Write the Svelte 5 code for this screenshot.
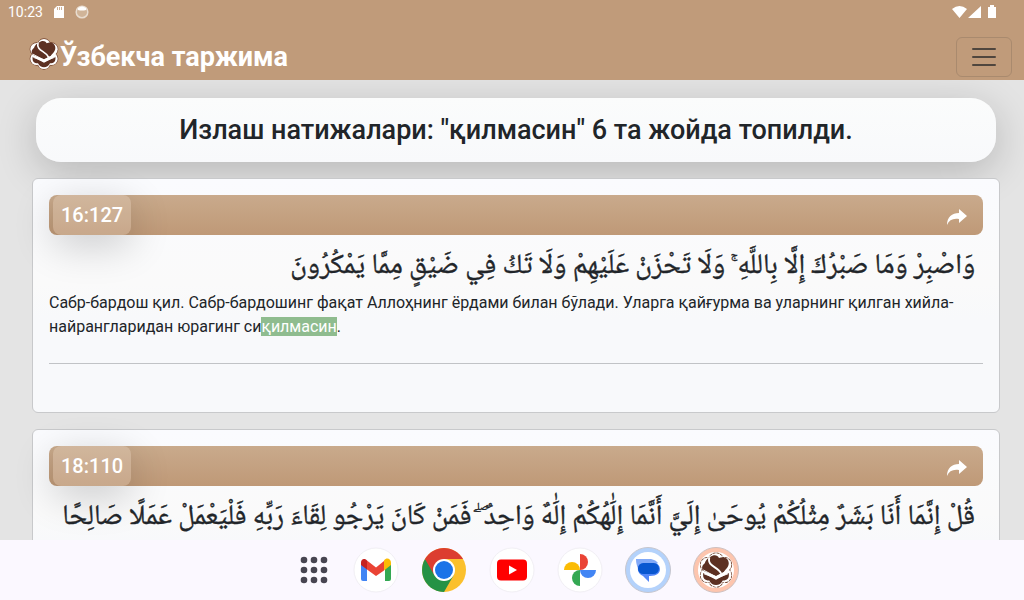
<script>
  const verses = [
    {
      ref: '16:127',
      arabic: 'وَاصْبِرْ وَمَا صَبْرُكَ إِلَّا بِاللَّهِ ۚ وَلَا تَحْزَنْ عَلَيْهِمْ وَلَا تَكُ فِي ضَيْقٍ مِمَّا يَمْكُرُونَ',
      before: 'Сабр-бардош қил. Сабр-бардошинг фақат Аллоҳнинг ёрдами билан бўлади. Уларга қайғурма ва уларнинг қилган хийла-найрангларидан юрагинг си',
      match: 'қилмасин',
      after: '.'
    },
    {
      ref: '18:110',
      arabic: 'قُلْ إِنَّمَا أَنَا بَشَرٌ مِثْلُكُمْ يُوحَىٰ إِلَيَّ أَنَّمَا إِلَٰهُكُمْ إِلَٰهٌ وَاحِدٌ ۖ فَمَنْ كَانَ يَرْجُو لِقَاءَ رَبِّهِ فَلْيَعْمَلْ عَمَلًا صَالِحًا'
    }
  ];
  const lobes = [[24, 11], [35, 17], [35, 31], [24, 37], [13, 31], [13, 17]];
</script>

{#snippet emblem()}
  <g class="edge">{#each lobes as [x, y]}<circle cx={x} cy={y} r="9.500" />{/each}</g>
  <g fill="#fff">{#each lobes as [x, y]}<circle cx={x} cy={y} r="9.500" />{/each}<circle cx="24" cy="24" r="12" /></g>
  <path d="M16 7c5-4 10-3 12 1 6-3 13 0 13 7 0 5-4 8-7 12l-10 5L7 25c-3-4-1-8 2-10 1-4 4-7 7-8z" fill="#5c3022" />
  <path d="M7 28l17 9 17-9c1 7-2 10-8 10-2 4-5 6-9 6s-7-2-9-6c-6 0-9-3-8-10z" fill="#5c3022" />
  <path d="M15 7c-3 13 12 12 16 22" fill="none" stroke="#fff" stroke-width="2.500" />
  <path d="M7 24l17 9 17-9M8 29l16 6 16-6" fill="none" stroke="#fff" stroke-width="1.300" />
{/snippet}

<div class="screen">
  <header>
    <div class="status">
      <span>10:23</span>
      <svg width="12" height="14" viewBox="0 0 12 14" aria-hidden="true"><path d="M4 1h7v12H1V4z" fill="#fff" /><path d="M4.500 2v3M6.500 2v3M8.500 2v3" stroke="#c19d7b" stroke-width=".8" /></svg>
      <svg width="14" height="14" viewBox="0 0 14 14" aria-hidden="true"><circle cx="7" cy="7" r="5.800" fill="#d0b498" stroke="#e8dccf" stroke-width="1.500" /><path d="M3 3q4-3 8 0v2q-4 1-8 0z" fill="#fff" /></svg>
      <svg class="signals" width="46" height="14" viewBox="0 0 46 14" aria-hidden="true"><path d="M0 4q7.500-6 15 0L7.500 13zM29 1v12H16zM36 2h2V0h4v2h2v11h-8z" fill="#fff" /></svg>
    </div>
    <nav>
      <a class="brand" href="#top"><svg width="32" height="32" viewBox="0 0 48 48" aria-hidden="true">{@render emblem()}</svg><span>Ўзбекча таржима</span></a>
      <button class="toggler" aria-label="Меню"><svg width="30" height="30" viewBox="0 0 30 30"><path d="M4 7h22M4 15h22M4 23h22" stroke="#4f463e" stroke-width="2" stroke-linecap="round" /></svg></button>
    </nav>
  </header>

  <main>
    <h1>Излаш натижалари: "қилмасин" 6 та жойда топилди.</h1>
    {#each verses as v}
      <article>
        <div class="bar">
          <a class="ref" href={'#' + v.ref}>{v.ref}</a>
          <button class="share" aria-label="Улашиш"><svg width="20" height="18" viewBox="0 0 20 18"><path d="M12 1l8 7-8 7v-4C6 10 2 12 0 17 0 9 5 5 12 5z" fill="#fff" /></svg></button>
        </div>
        <p class="arabic" dir="rtl" lang="ar">{v.arabic}</p>
        {#if v.match}
          <p class="text">{v.before}<mark>{v.match}</mark>{v.after}</p>
        {/if}
        <hr />
      </article>
    {/each}
  </main>

  <footer>
    <button aria-label="Apps"><svg width="36" height="48" viewBox="6 0 36 48"><g fill="#474551">{#each [14, 24, 34] as y}{#each [14, 24, 34] as x}<circle cx={x} cy={y} r="3.300" />{/each}{/each}</g></svg></button>
    <button aria-label="Gmail"><svg width="48" height="48" viewBox="0 0 48 48"><circle cx="24" cy="24" r="22" class="disc" /><path d="M9 17l6 4v14h-4q-2 0-2-2z" fill="#4285f4" /><path d="M39 17l-6 4v14h4q2 0 2-2z" fill="#34a853" /><path d="M32 14.500c3-4 7-1 7 2V19l-7 5.500z" fill="#fbbc04" /><path d="M15 14.500l9 7 8-6.500v9.500L24 30l-9-6.500z" fill="#ea4335" /><path d="M9 19v-2.500c0-3 3-5 6-2v9z" fill="#c5221f" /></svg></button>
    <button aria-label="Chrome"><svg width="48" height="48" viewBox="0 0 48 48"><circle cx="24" cy="24" r="22" fill="#fbc02d" /><path d="M24 24L5 13A22 22 0 0 0 24 46l9.500-16.500z" fill="#259245" /><path d="M5 13A22 22 0 0 1 43 13H24v11l-9.500 5.500z" fill="#dc3d30" /><circle cx="24" cy="24" r="11" fill="#fff" /><circle cx="24" cy="24" r="9" fill="#1a73e8" /></svg></button>
    <button aria-label="YouTube"><svg width="48" height="48" viewBox="0 0 48 48"><circle cx="24" cy="24" r="22" class="disc" /><rect x="9" y="13.500" width="30" height="21" rx="4" fill="#f00" /><path d="M21 19.500v9l8-4.500z" fill="#fff" /></svg></button>
    <button aria-label="Photos"><svg width="48" height="48" viewBox="0 0 48 48"><circle cx="24" cy="24" r="22" class="disc" /><path d="M24 8a8 8 0 0 1 0 16z" fill="#ea4335" /><path d="M40 24a8 8 0 0 1-16 0z" fill="#4285f4" /><path d="M24 40a8 8 0 0 1 0-16z" fill="#34a853" /><path d="M8 24a8 8 0 0 1 16 0z" fill="#fbbc04" /></svg></button>
    <button aria-label="Messages"><svg width="48" height="48" viewBox="0 0 48 48"><circle cx="24" cy="24" r="22.500" fill="#b4d2fb" stroke="#c6c6ce" /><circle cx="24" cy="24" r="18" fill="#fff" /><path d="M12 13h15q5 1 7 4L18 27c-4-3-6-8-6-14z" fill="#82a9f7" /><path d="M20 17h10a6 6 0 0 1 6 6c0 4-3 7-10 7h-1v6l-6-6c-7-3-7-13 1-13z" fill="#5387f8" /><rect x="14" y="17" width="21" height="11" rx="5.500" fill="#0957d0" /></svg></button>
    <button aria-label="Ўзбекча таржима"><svg width="48" height="48" viewBox="0 0 48 48"><circle cx="24" cy="24" r="22.500" fill="#fdc5ae" stroke="#cdc0c0" /><circle cx="24" cy="24" r="18" fill="#fff" /><g class="fine" transform="translate(6 6) scale(.75)">{@render emblem()}</g></svg></button>
  </footer>
</div>

<style>
  :global(body) { margin: 0; }
  * { box-sizing: border-box; }
  .screen { height: 100vh; display: flex; flex-direction: column; overflow: hidden; background: #e4e4e4; color: #212529; font-family: Roboto, sans-serif; font-size: 16px; line-height: 24px; }
  header { flex: none; background: #c09b7a; color: #fff; }
  .status { display: flex; align-items: center; gap: 10px; height: 24px; padding: 0 26px 0 8px; font-size: 14px; }
  .signals { margin-left: auto; }
  nav { display: flex; justify-content: space-between; align-items: center; height: 56px; padding: 10px 12px 0 28px; }
  .brand { display: flex; align-items: flex-start; color: #fff; font-size: 27px; line-height: 38px; font-weight: 700; text-decoration: none; }
  button { display: flex; align-items: center; justify-content: center; border: 0; padding: 0; background: none; }
  .toggler { width: 56px; height: 40px; border: 1px solid #a98a6e; border-radius: 6px; }
  .edge { fill: none; stroke: #75452f; stroke-width: 2; }
  .fine .edge { stroke-width: 2; stroke-dasharray: 4 1; }
  main { flex: 1; min-height: 0; padding: 18px 24px 0 32px; overflow: hidden; }
  h1 { margin: 0 4px 16px; padding: 14px 16px; border-radius: 25px; background: linear-gradient(#fbfcfc, #f8f9fb); box-shadow: 0 10px 40px rgba(0, 0, 0, .2); text-align: center; font-size: 27px; line-height: 36px; font-weight: 500; }
  article { margin-bottom: 16px; padding: 16px; border: 1px solid #c8c9cb; border-radius: 6px; background: linear-gradient(#fafbfe, #fafafa 45%, #f8f9fb 60%); }
  .bar { display: flex; justify-content: space-between; height: 40px; padding: 0 16px 0 4px; border-radius: 8px; background: linear-gradient(#c9aa8c, #bf9977); }
  .share { padding-top: 4px; }
  .ref { padding: 0 8px; border-radius: 8px; background: rgba(255, 255, 255, .15); box-shadow: 0 10px 40px rgba(0, 0, 0, .2); color: #fff; font-size: 20px; line-height: 40px; font-weight: 500; text-decoration: none; }
  .arabic { margin: 0; padding: 12px 8px 4px 0; font-family: "Noto Naskh Arabic", "Noto Sans Arabic", "DejaVu Sans", sans-serif; font-size: 28px; line-height: 40px; -webkit-text-stroke: .4px #212529; }
  .text { margin: 0; }
  mark { background: #8fbc8f; color: #fff; }
  hr { margin: 24px 0 32px; border: 0; border-top: 1px solid #c1c3c6; }
  footer { flex: none; display: flex; justify-content: center; align-items: center; gap: 20px; height: 60px; padding-left: 12px; background: #fbf8ff; }
  .disc { fill: #fff; stroke: #f1eff4; }
</style>
